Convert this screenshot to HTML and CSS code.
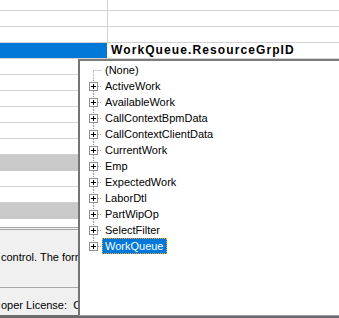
FILE: index.html
```html
<!DOCTYPE html>
<html>
<head>
<meta charset="utf-8">
<link rel="stylesheet" href="styles.css">
</head>
<body>
<div class="page">
  <div class="grid">
    <div class="row first"><div class="name"></div><div class="value"></div></div>
    <div class="row"><div class="name"></div><div class="value"></div></div>
    <div class="row"><div class="name"></div><div class="value"></div></div>
    <div class="row sel"><div class="name"></div><div class="value">WorkQueue.ResourceGrpID</div></div>
    <div class="row"><div class="name"></div><div class="value"></div></div>
    <div class="row"><div class="name"></div><div class="value"></div></div>
    <div class="row"><div class="name"></div><div class="value"></div></div>
    <div class="row"><div class="name"></div><div class="value"></div></div>
    <div class="row"><div class="name"></div><div class="value"></div></div>
    <div class="row"><div class="name"></div><div class="value"></div></div>
    <div class="row cat"><div class="name"></div><div class="value"></div></div>
    <div class="row"><div class="name"></div><div class="value"></div></div>
    <div class="row"><div class="name"></div><div class="value"></div></div>
    <div class="row cat"><div class="name"></div><div class="value"></div></div>
  </div>
  <div class="gap"></div>
  <div class="panel">
    <div class="desc">control. The format of the value is Table.Column.</div>
    <div class="lic">oper License:  Customer</div>
  </div>
  <div class="bottom"></div>

  <div class="dropdown">
    <div class="tree">
      <div class="node">
        <svg class="lines" width="22" height="16" viewBox="0 0 22 16"><path d="M13.5 8.5V16M13.5 8.5H22" stroke="#a0a0a0" stroke-dasharray="1 1" fill="none"/></svg>
        <span class="label">(None)</span>
      </div>
      <div class="node">
        <svg class="lines" width="22" height="16" viewBox="0 0 22 16"><path d="M13.5 0V4M13.5 13V16M18 8.5H22" stroke="#a0a0a0" stroke-dasharray="1 1" fill="none"/><rect x="9.5" y="4.5" width="8" height="8" fill="#fff" stroke="#919191"/><path d="M11 8.5H16M13.5 6V11" stroke="#000"/></svg>
        <span class="label">ActiveWork</span>
      </div>
      <div class="node">
        <svg class="lines" width="22" height="16" viewBox="0 0 22 16"><path d="M13.5 0V4M13.5 13V16M18 8.5H22" stroke="#a0a0a0" stroke-dasharray="1 1" fill="none"/><rect x="9.5" y="4.5" width="8" height="8" fill="#fff" stroke="#919191"/><path d="M11 8.5H16M13.5 6V11" stroke="#000"/></svg>
        <span class="label">AvailableWork</span>
      </div>
      <div class="node">
        <svg class="lines" width="22" height="16" viewBox="0 0 22 16"><path d="M13.5 0V4M13.5 13V16M18 8.5H22" stroke="#a0a0a0" stroke-dasharray="1 1" fill="none"/><rect x="9.5" y="4.5" width="8" height="8" fill="#fff" stroke="#919191"/><path d="M11 8.5H16M13.5 6V11" stroke="#000"/></svg>
        <span class="label">CallContextBpmData</span>
      </div>
      <div class="node">
        <svg class="lines" width="22" height="16" viewBox="0 0 22 16"><path d="M13.5 0V4M13.5 13V16M18 8.5H22" stroke="#a0a0a0" stroke-dasharray="1 1" fill="none"/><rect x="9.5" y="4.5" width="8" height="8" fill="#fff" stroke="#919191"/><path d="M11 8.5H16M13.5 6V11" stroke="#000"/></svg>
        <span class="label">CallContextClientData</span>
      </div>
      <div class="node">
        <svg class="lines" width="22" height="16" viewBox="0 0 22 16"><path d="M13.5 0V4M13.5 13V16M18 8.5H22" stroke="#a0a0a0" stroke-dasharray="1 1" fill="none"/><rect x="9.5" y="4.5" width="8" height="8" fill="#fff" stroke="#919191"/><path d="M11 8.5H16M13.5 6V11" stroke="#000"/></svg>
        <span class="label">CurrentWork</span>
      </div>
      <div class="node">
        <svg class="lines" width="22" height="16" viewBox="0 0 22 16"><path d="M13.5 0V4M13.5 13V16M18 8.5H22" stroke="#a0a0a0" stroke-dasharray="1 1" fill="none"/><rect x="9.5" y="4.5" width="8" height="8" fill="#fff" stroke="#919191"/><path d="M11 8.5H16M13.5 6V11" stroke="#000"/></svg>
        <span class="label">Emp</span>
      </div>
      <div class="node">
        <svg class="lines" width="22" height="16" viewBox="0 0 22 16"><path d="M13.5 0V4M13.5 13V16M18 8.5H22" stroke="#a0a0a0" stroke-dasharray="1 1" fill="none"/><rect x="9.5" y="4.5" width="8" height="8" fill="#fff" stroke="#919191"/><path d="M11 8.5H16M13.5 6V11" stroke="#000"/></svg>
        <span class="label">ExpectedWork</span>
      </div>
      <div class="node">
        <svg class="lines" width="22" height="16" viewBox="0 0 22 16"><path d="M13.5 0V4M13.5 13V16M18 8.5H22" stroke="#a0a0a0" stroke-dasharray="1 1" fill="none"/><rect x="9.5" y="4.5" width="8" height="8" fill="#fff" stroke="#919191"/><path d="M11 8.5H16M13.5 6V11" stroke="#000"/></svg>
        <span class="label">LaborDtl</span>
      </div>
      <div class="node">
        <svg class="lines" width="22" height="16" viewBox="0 0 22 16"><path d="M13.5 0V4M13.5 13V16M18 8.5H22" stroke="#a0a0a0" stroke-dasharray="1 1" fill="none"/><rect x="9.5" y="4.5" width="8" height="8" fill="#fff" stroke="#919191"/><path d="M11 8.5H16M13.5 6V11" stroke="#000"/></svg>
        <span class="label">PartWipOp</span>
      </div>
      <div class="node">
        <svg class="lines" width="22" height="16" viewBox="0 0 22 16"><path d="M13.5 0V4M13.5 13V16M18 8.5H22" stroke="#a0a0a0" stroke-dasharray="1 1" fill="none"/><rect x="9.5" y="4.5" width="8" height="8" fill="#fff" stroke="#919191"/><path d="M11 8.5H16M13.5 6V11" stroke="#000"/></svg>
        <span class="label">SelectFilter</span>
      </div>
      <div class="node">
        <svg class="lines" width="22" height="16" viewBox="0 0 22 16"><path d="M13.5 0V4M18 8.5H22" stroke="#a0a0a0" stroke-dasharray="1 1" fill="none"/><rect x="9.5" y="4.5" width="8" height="8" fill="#fff" stroke="#919191"/><path d="M11 8.5H16M13.5 6V11" stroke="#000"/></svg>
        <span class="label selected">WorkQueue</span>
      </div>
    </div>
  </div>
</div>
</body>
</html>
```
FILE: styles.css
```css
* { box-sizing: border-box; }
html, body { margin: 0; padding: 0; background: #fff; }
body {
  font-family: "Liberation Sans", Arial, sans-serif;
  font-size: 11px;
  color: #000;
}
.page {
  position: relative;
  width: 339px;
  height: 318px;
  overflow: hidden;
}
.grid { display: flex; flex-direction: column; }
.row {
  display: flex;
  height: 16px;
  border-bottom: 1px solid #d2d2d2;
}
.row.first { height: 11px; }
.name {
  width: 108px;
  border-right: 1px solid #d2d2d2;
}
.value {
  flex: 1;
  padding-left: 3px;
  line-height: 15px;
  white-space: nowrap;
}
.row.sel .name { background: #0078d7; border-right-color: #fff; }
.row.sel .value { font-weight: bold; font-size: 12px; letter-spacing: 1.1px; }
.row.cat { background: #cacaca; border-bottom-color: #cacaca; }
.row.cat .name { border-right-color: #cacaca; }
.gap { height: 8px; }
.panel {
  height: 88px;
  background: #f0f0f0;
  border-top: 3px double #a6a6a6;
  display: flex;
  flex-direction: column;
}
.desc {
  height: 58px;
  padding: 19px 0 0 1px;
  line-height: 16px;
  white-space: nowrap;
  border-bottom: 1px solid #a8a8a8;
}
.lic {
  flex: 1;
  padding: 9px 0 0 1px;
  line-height: 16px;
  white-space: pre;
}
.bottom { height: 3px; background: #6b6b6b; }
.dropdown {
  position: absolute;
  left: 78px;
  top: 59px;
  right: 0;
  height: 257px;
  background: #fff;
  border-left: 2px solid #747474;
  border-top: 2px solid #7c7c7c;
  border-bottom: 1px solid #9a9aa6;
  padding-top: 1px;
}
.tree { display: flex; flex-direction: column; }
.node {
  display: flex;
  align-items: center;
  height: 16px;
}
.lines { display: block; flex: none; }
.label {
  padding: 0 2px;
  height: 16px;
  line-height: 14px;
  white-space: nowrap;
  border: 1px solid transparent;
}
.label.selected {
  background: #0078d7;
  color: #fff;
  border: 1px dotted #f0a030;
}
```
